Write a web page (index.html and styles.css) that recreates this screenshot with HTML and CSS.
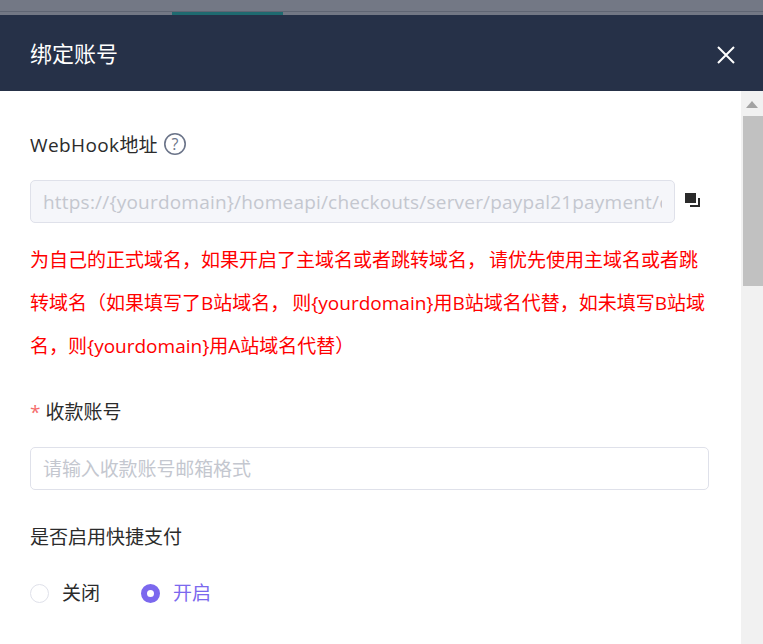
FILE: index.html
```html
<!DOCTYPE html>
<html lang="zh-CN">
<head>
  <meta charset="UTF-8">
  <title>绑定账号</title>
  <link rel="stylesheet" href="styles.css">
</head>
<body>

  <div class="backdrop">
    <div class="backdrop-tab"></div>
  </div>

  <div class="drawer-header">
    <span class="drawer-title">绑定账号</span>
    <svg class="close-icon" width="18" height="18" viewBox="0 0 18 18">
      <path d="M1 1 L17 17 M17 1 L1 17" stroke="#fff" stroke-width="2" fill="none"/>
    </svg>
  </div>

  <div class="drawer-main">
    <div class="drawer-body">

      <div class="field-label webhook-label">
        <span class="latin-wide">WebHook</span>地址
        <svg class="help-icon" width="24" height="24" viewBox="0 0 24 24">
          <circle cx="12" cy="12" r="10.2" stroke="#6b7489" stroke-width="1.6" fill="none"/>
          <text x="12" y="17.5" text-anchor="middle" class="help-mark">?</text>
        </svg>
      </div>

      <div class="copy-row">
        <input class="input input-disabled" type="text" disabled value="https://{yourdomain}/homeapi/checkouts/server/paypal21payment/callback">
        <svg class="copy-icon" width="16" height="15" viewBox="0 0 16 15">
          <path d="M5 12 H13 V5 H15 V14 H5 Z" fill="#2b2b2b"/>
          <rect x="0" y="0" width="11" height="10" fill="#2b2b2b"/>
        </svg>
      </div>

      <p class="notice">为自己的正式域名，如果开启了主域名或者跳转域名， 请优先使用主域名或者跳转域名（如果填写了B站域名， 则{yourdomain}用B站域名代替，如未填写B站域名，则{yourdomain}用A站域名代替）</p>

      <div class="field-label account-label"><span class="required">*</span> 收款账号</div>
      <input class="input" type="text" placeholder="请输入收款账号邮箱格式">

      <div class="field-label quick-label">是否启用快捷支付</div>

      <div class="radio-group">
        <div class="radio">
          <span class="radio-dot"></span>
          关闭
        </div>
        <div class="radio radio-checked">
          <span class="radio-dot"></span>
          开启
        </div>
      </div>

    </div>

    <div class="scrollbar">
      <div class="scroll-arrow"></div>
      <div class="scroll-thumb"></div>
    </div>
  </div>

</body>
</html>
```

FILE: styles.css
```css
html, body { height: 100%; overflow: hidden; }
body {
  margin: 0;
  display: flex;
  flex-direction: column;
  font-family: "Open Sans", "Noto Sans CJK SC", sans-serif;
  font-size: 19px;
  color: #2b2b2b;
  background: #fff;
}

.backdrop { height: 15px; box-sizing: border-box; flex: none; padding-top: 11px; background: #737885; }
.backdrop-tab { height: 4px; box-sizing: border-box; border-top: 1px solid #5f6573; background: linear-gradient(#1f6a70, #1f6a70) 172px 0 / 111px 100% no-repeat; }

.drawer-header {
  height: 76px;
  flex: none;
  box-sizing: border-box;
  padding: 0 28px 0 30px;
  display: flex;
  align-items: center;
  justify-content: space-between;
  background: #263148;
}
.drawer-title { color: #fff; font-size: 22px; margin-bottom: 2px; }
.close-icon { display: block; margin-top: 4px; }

.drawer-main { flex: 1; display: flex; min-height: 0; }
.drawer-body { flex: 1; min-width: 0; box-sizing: border-box; padding: 40px 32px 0 30px; }

.field-label { line-height: 28px; }
.webhook-label { display: flex; align-items: center; }
.latin-wide { letter-spacing: 0.4px; }
.help-icon { display: block; margin-left: 5px; margin-top: -2px; }
.help-mark { font-size: 16px; fill: #6b7489; font-family: "Open Sans", sans-serif; }

.input {
  display: block;
  width: 100%;
  height: 43px;
  box-sizing: border-box;
  padding: 0 12px;
  border: 1px solid #dfe1ea;
  border-radius: 5px;
  outline: none;
  background: #fff;
  color: #c4c7cf;
  font: inherit;
  letter-spacing: 0.2px;
}
.input::placeholder { color: #c4c7cf; letter-spacing: -0.1px; opacity: 1; }
.input-disabled { flex: 1; width: auto; min-width: 0; background: #f5f6fa; }

.copy-row { display: flex; align-items: center; gap: 10px; margin-top: 21px; }
.copy-icon { flex: none; margin-right: 8px; margin-top: -3px; }

.notice { margin: 16px 0 0; line-height: 43px; color: #f00; word-spacing: -2px; }

.account-label { margin-top: 30px; }
.account-label + .input { margin-top: 21px; }
.required { color: #f56c6c; }

.quick-label { margin-top: 33px; }

.radio-group { display: flex; gap: 41px; margin-top: 28px; }
.radio { display: flex; align-items: center; gap: 13px; line-height: 28px; }
.radio-dot { width: 19px; height: 19px; box-sizing: border-box; border: 1px solid #dfe1ea; border-radius: 50%; background: #fff; }
.radio-checked { color: #7b68ee; }
.radio-checked .radio-dot { border: 6.5px solid #7b68ee; }

.scrollbar { width: 22px; flex: none; display: flex; flex-direction: column; align-items: flex-end; background: #f1f1f1; }
.scroll-arrow { width: 0; height: 0; margin: 10px 5px 8px 0; border-left: 6px solid transparent; border-right: 6px solid transparent; border-bottom: 7px solid #a3a3a3; }
.scroll-thumb { width: 20px; height: 170px; background: #c1c1c1; }
```
